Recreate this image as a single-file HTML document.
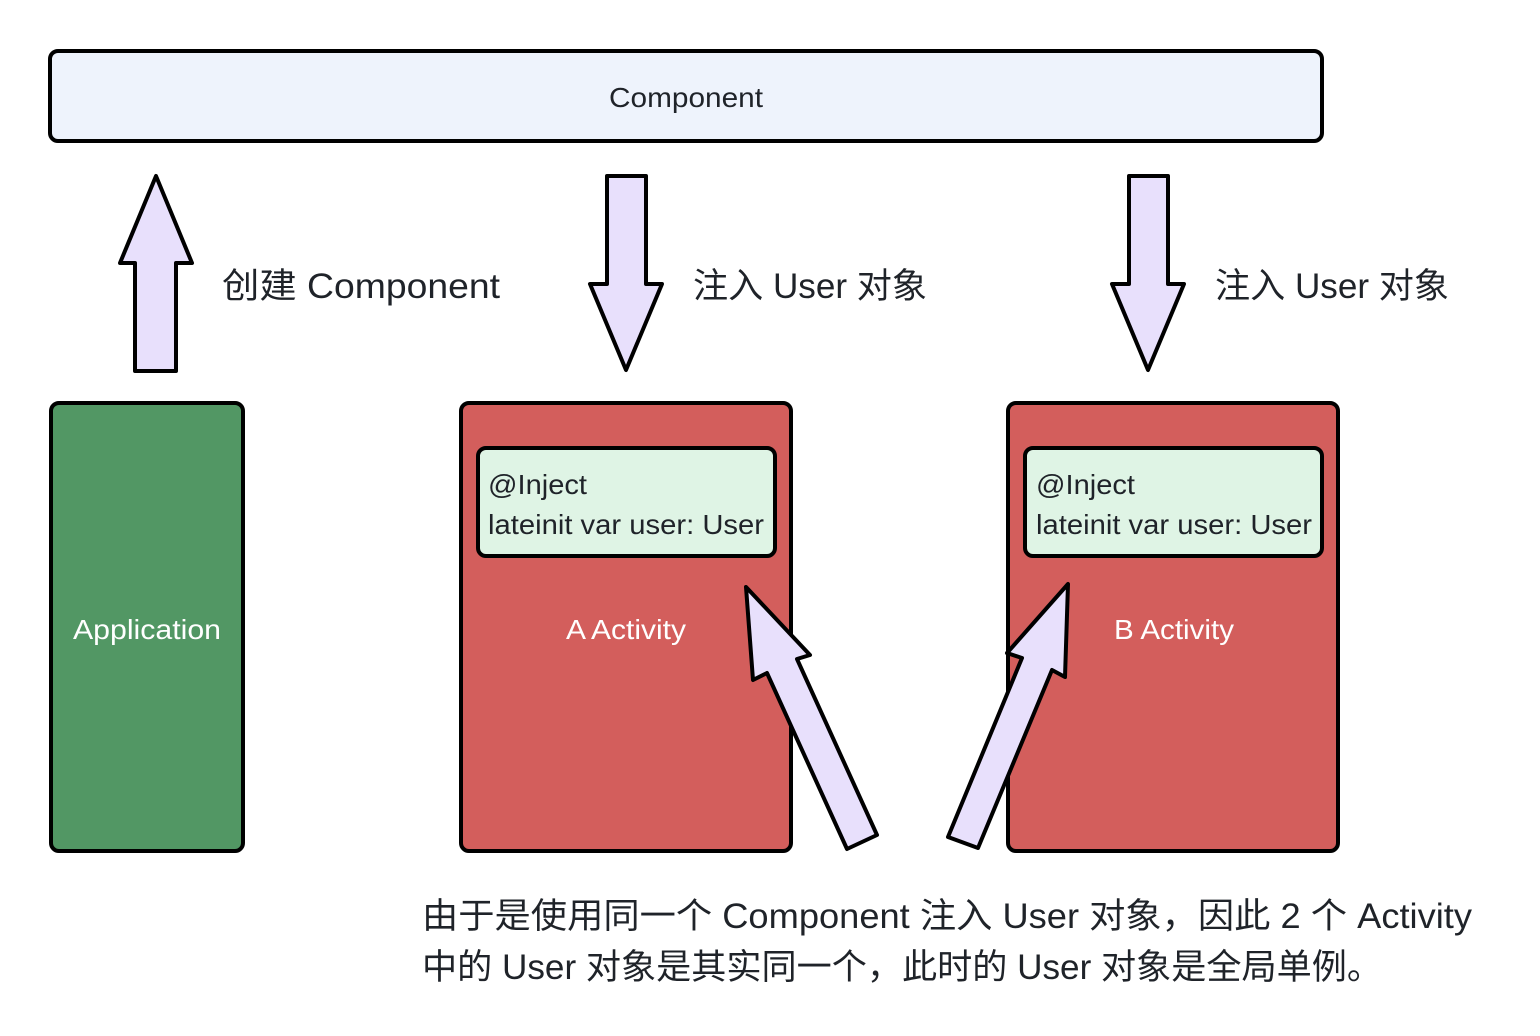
<!DOCTYPE html>
<html><head><meta charset="utf-8"><style>
html,body{margin:0;padding:0;background:#fff;}
svg{display:block;}
text{font-family:"Liberation Sans","Noto Sans CJK SC",sans-serif;fill:#1f2329;}
</style></head><body>
<svg width="1540" height="1036" viewBox="0 0 1540 1036" xmlns="http://www.w3.org/2000/svg">
<g stroke="#000" stroke-width="4" stroke-linejoin="round">
<rect x="50" y="51" width="1272" height="90" rx="8" fill="#eef3fc"/>
<rect x="51" y="403" width="192" height="448" rx="8" fill="#529764"/>
<rect x="461" y="403" width="330" height="448" rx="8" fill="#d35e5c"/>
<rect x="1008" y="403" width="330" height="448" rx="8" fill="#d35e5c"/>
<rect x="478" y="448" width="297" height="108" rx="8" fill="#dff4e5"/>
<rect x="1025" y="448" width="297" height="108" rx="8" fill="#dff4e5"/>
<polygon fill="#e8e0fc" points="156,176 192,263 176,263 176,371 135,371 135,263 120,263"/>
<polygon fill="#e8e0fc" points="607,176 646,176 646,284 662,284 626,370 590,284 607,284"/>
<polygon fill="#e8e0fc" points="1129,176 1168,176 1168,284 1184,284 1148,370 1112,284 1129,284"/>
<polygon fill="#e8e0fc" points="746,587 810,655 797,659 877,835 847,849 767,673 753,680"/>
<polygon fill="#e8e0fc" points="1068,584 1065,677 1052,670 978,848 948,837 1022,658 1007,653"/>
</g>
<text x="686" y="107" font-size="28" text-anchor="middle" textLength="154" lengthAdjust="spacingAndGlyphs">Component</text>
<text x="147" y="639" font-size="28" text-anchor="middle" style="fill:#fff" textLength="148" lengthAdjust="spacingAndGlyphs">Application</text>
<text x="626" y="639" font-size="28" text-anchor="middle" style="fill:#fff" textLength="120" lengthAdjust="spacingAndGlyphs">A Activity</text>
<text x="1174" y="639" font-size="28" text-anchor="middle" style="fill:#fff" textLength="120" lengthAdjust="spacingAndGlyphs">B Activity</text>
<text x="488" y="494" font-size="28" textLength="99" lengthAdjust="spacingAndGlyphs">@Inject</text>
<text x="488" y="534" font-size="28" textLength="276" lengthAdjust="spacingAndGlyphs">lateinit var user: User</text>
<text x="1036" y="494" font-size="28" textLength="99" lengthAdjust="spacingAndGlyphs">@Inject</text>
<text x="1036" y="534" font-size="28" textLength="276" lengthAdjust="spacingAndGlyphs">lateinit var user: User</text>
<text x="222" y="298" font-size="35" textLength="278" lengthAdjust="spacingAndGlyphs">创建 Component</text>
<text x="693" y="298" font-size="35" textLength="234" lengthAdjust="spacingAndGlyphs">注入 User 对象</text>
<text x="1215" y="298" font-size="35" textLength="234" lengthAdjust="spacingAndGlyphs">注入 User 对象</text>
<text x="422" y="928" font-size="35" textLength="1050" lengthAdjust="spacingAndGlyphs">由于是使用同一个 Component 注入 User 对象，因此 2 个 Activity</text>
<text x="422" y="979" font-size="35" textLength="960" lengthAdjust="spacingAndGlyphs">中的 User 对象是其实同一个，此时的 User 对象是全局单例。</text>
</svg>
</body></html>
